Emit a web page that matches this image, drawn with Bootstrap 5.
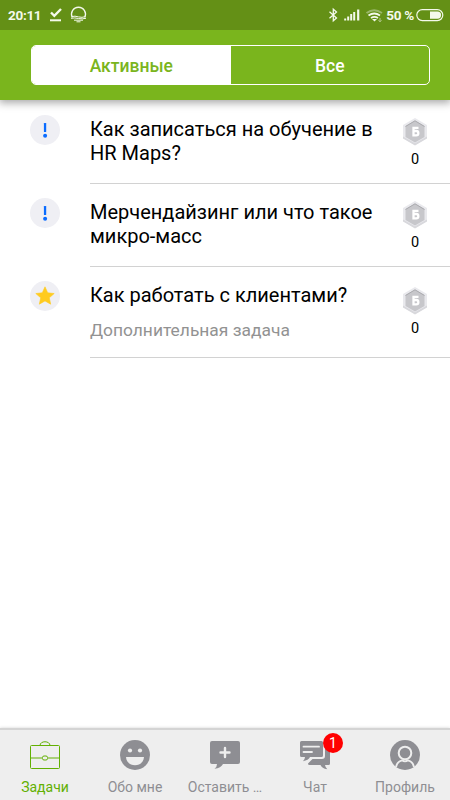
<!DOCTYPE html>
<html lang="ru">
<head>
<meta charset="utf-8">
<meta name="viewport" content="width=device-width, initial-scale=1">
<title>Задачи</title>
<link href="https://cdn.jsdelivr.net/npm/bootstrap@5.3.0/dist/css/bootstrap.min.css" rel="stylesheet">
<style>
body{font-family:Roboto,"Noto Sans",sans-serif;color:#000;background:#fff}
svg{display:block;flex:none}
.app{height:800px;width:450px}
.status-line{height:30px;background:#649016;color:#f4f9ec;font-size:13.500px;letter-spacing:-.3px;font-weight:700;line-height:30px;padding-left:8px;padding-right:6px;z-index:2}
.status-marks{margin-left:5px}
.battery{margin-left:2px}
.battery-value{margin-left:3px}
.top-panel{height:70px;background:#7ab51d;padding:15px 20px 15px 31px;box-shadow:0 2px 8px 1px rgba(0,0,0,.34);z-index:1}
.switcher{border:1px solid #fff;border-radius:5px;height:40px;overflow:hidden}
.switcher .btn{border:0;border-radius:0;font-size:17.500px;font-weight:500;line-height:40px;padding:0;color:#fff}
.switcher .btn.active{background:#fff;color:#7ab51d}
.task{height:83px;padding-left:30px}
.task:first-child{height:84px}
.task.extra{height:91px}
.task-icon{width:30px;height:30px;margin-top:15px;margin-right:30px;background:#efeff4}
.task:not(:first-child) .task-icon{margin-top:14px}
.task-body{border-bottom:1px solid #d2d2d2;padding-top:17px}
.task:not(:first-child) .task-body{padding-top:16px}
.task-title{font-size:20px;line-height:24px;width:300px}
.task-note{font-size:17.400px;line-height:22px;margin-top:12px;color:#929292}
.score{width:50px;margin-right:10px;font-size:14.500px;line-height:18px}
.score{padding-top:1px}
.extra .score{padding-top:4px}
.bottom-bar{height:72px;background:#eee;border-top:2px solid #d4d4d4;box-shadow:0 0 3px rgba(0,0,0,.18)}
.bottom-bar .nav-link{padding:10px 0 0;font-size:14px;line-height:20px;color:#8e8e93}
.bottom-bar .nav-link.active{color:#62b002}
.caption{margin-top:7px;white-space:nowrap}
.count{position:absolute;left:23px;top:-7px;width:20px;height:20px;background:#f00;color:#fff;font-size:14px;line-height:20px}
</style>
<script src="https://cdn.jsdelivr.net/npm/bootstrap@5.3.0/dist/js/bootstrap.bundle.min.js"></script>
</head>
<body>
<svg width="0" height="0" class="position-absolute" aria-hidden="true">
<defs>
<g id="coin"><path d="M13 0 25 7v13L13 27 1 20V7Z" fill="#e9e9ed"/><path d="M1 18.500v2L13 27.500l12-7v-2L13 25.300Z" fill="#d8d8dc"/><path d="M13 2.500 22.500 8v11L13 24.500 3.500 19V8Z" fill="#c7c7cb"/><path d="M3.500 8.500 13 2.800l9.500 5.700" fill="none" stroke="#aaaaae"/><path d="M16.500 9.800h-5v7.500h2.700a2.100 2.100 0 0 0 0-4.300h-2.700" fill="none" stroke="#fff" stroke-width="2.300"/></g>
<g id="bang"><rect x="13.900" y="8" width="2.300" height="9" rx=".6" fill="#0a6cff"/><circle cx="15.100" cy="20.700" r="2" fill="#0a6cff"/></g>
</defs>
</svg>
<div class="app d-flex flex-column overflow-hidden">
  <header class="status-line position-relative d-flex align-items-center">
    <span>20:11</span>
    <svg class="status-marks" width="42" height="30" viewBox="0 0 42 30" fill="none" stroke="#f4f9ec"><path d="m5 12.500 3.300 3.300L15 9" stroke-width="2.400"/><path d="M4 20.300h11" stroke-width="2"/><path d="M26.300 17.500a7 7 0 1 1 12.400 0" stroke-width="1.300"/><path d="M25.500 16.600q3.500-1 7 .3 3.500 1 7-.3M25 18.300q3.800-.8 7.500.2 3.700.8 7.500-.2M28 20.200h9M30.500 21.800h4" stroke-width="1"/></svg>
    <svg class="ms-auto" width="56" height="30" viewBox="328 0 56 30" fill="none" stroke="#f4f9ec"><path d="m330.500 11.800 7 6.200-3.200 2.800V9.200l3.200 2.800-7 6.200" stroke-width="1.300"/><path d="M346.200 20.500v-2M349.200 20.500v-4M352.200 20.500v-6.500M355.200 20.500v-8.500" stroke-width="2"/><path d="M359.200 20.500V9.500" stroke-width="2.200"/><path d="M367.500 13q7.500-5.500 15.500 0" stroke="#9ab76a" stroke-width="1.800"/><path d="M369.500 15.500q5.800-4 11.500 0M372 18q3.500-2.200 7 0" stroke-width="1.800"/><path d="m373 19 2.500 2.500 2.500-2.500Z" fill="#f4f9ec" stroke="none"/><path d="M381 18v3.500m-1.500-1.200 1.500 1.500 1.500-1.500" stroke="#c7d6ac" stroke-width=".8"/></svg>
    <span class="text-nowrap battery-value">50 %</span>
    <svg width="28" height="16" viewBox="0 0 28 16" class="battery"><rect x=".8" y="2.600" width="26" height="11" rx="5.500" fill="none" stroke="#f4f9ec" stroke-width="1.200"/><path d="M14 4.500h7.500a3.600 3.600 0 0 1 0 7.200H14Z" fill="#f4f9ec"/></svg>
  </header>
  <div class="top-panel position-relative">
    <div class="switcher d-flex">
      <button class="btn active w-50">Активные</button>
      <button class="btn w-50">Все</button>
    </div>
  </div>
  <main class="flex-grow-1">
    <article class="task d-flex">
      <div class="task-icon rounded-circle"><svg width="30" height="30"><use href="#bang"/></svg></div>
      <div class="task-body flex-grow-1 d-flex">
        <div class="task-title">Как записаться на обучение в HR Maps?</div>
        <div class="score d-flex flex-column align-items-center"><svg width="26" height="33"><use href="#coin"/></svg>0</div>
      </div>
    </article>
    <article class="task d-flex">
      <div class="task-icon rounded-circle"><svg width="30" height="30"><use href="#bang"/></svg></div>
      <div class="task-body flex-grow-1 d-flex">
        <div class="task-title">Мерчендайзинг или что такое микро-масс</div>
        <div class="score d-flex flex-column align-items-center"><svg width="26" height="33"><use href="#coin"/></svg>0</div>
      </div>
    </article>
    <article class="task extra d-flex">
      <div class="task-icon rounded-circle"><svg width="30" height="30"><path d="m15 5.800 2.700 6 6.500.7-4.900 4.300 1.400 6.400-5.700-3.300-5.700 3.300 1.400-6.400-4.900-4.300 6.500-.7Z" fill="#ffcb20" stroke="#ffcb20" stroke-width=".6"/></svg></div>
      <div class="task-body flex-grow-1 d-flex">
        <div class="task-title">Как работать с клиентами?<div class="task-note">Дополнительная задача</div></div>
        <div class="score d-flex flex-column align-items-center"><svg width="26" height="33"><use href="#coin"/></svg>0</div>
      </div>
    </article>
  </main>
  <nav class="bottom-bar nav nav-justified flex-nowrap">
    <a class="nav-link active d-flex flex-column align-items-center" href="#"><svg width="32" height="30" viewBox="0 0 32 30" fill="none" stroke="#62b002"><rect x="1.500" y="5.500" width="29" height="23" rx="1"/><path d="M11 5.500c0-5 10-5 10 0M1.500 18H13m6 0h11.500"/><rect x="13.500" y="16" width="5" height="4" rx="1.500"/></svg><span class="caption">Задачи</span></a>
    <a class="nav-link d-flex flex-column align-items-center" href="#"><svg width="30" height="30"><circle cx="15" cy="15" r="15" fill="#8e8e93"/><circle cx="10" cy="10.500" r="2.100" fill="#eee"/><circle cx="20" cy="10.500" r="2.100" fill="#eee"/><path d="M6 17h18c-.5 11-17.500 11-18 0Z" fill="#eee"/></svg><span class="caption">Обо мне</span></a>
    <a class="nav-link d-flex flex-column align-items-center" href="#"><svg width="30" height="30"><path d="M2 1h26q2 0 2 2v19q0 2-2 2H13q-2 4-8.500 4.800Q7 27 7 24H2q-2 0-2-2V3q0-2 2-2Z" fill="#8e8e93"/><path d="M15 8v9m-4.500-4.500h9" stroke="#eee" stroke-width="2.400" stroke-linecap="round"/></svg><span class="caption">Оставить …</span></a>
    <a class="nav-link d-flex flex-column align-items-center" href="#"><span class="position-relative"><svg width="30" height="30" fill="#8e8e93"><path d="M1.500 1h20q1.500 0 1.500 1.500v13q0 1.500-1.500 1.500H10q-1.500 3.300-7 4.200Q5 19 5 17H1.500Q0 17 0 15.500v-13Q0 1 1.500 1Z"/><path d="M25 7h3.500Q30 7 30 8.500v15q0 1.500-1.500 1.500H25q.3 2.500 2.300 4.200-5.500-.8-6.800-4.200H9.500Q8 25 8 23.500L12.500 19H22q3 0 3-3Z"/><path d="M3.500 6.700h15.500M3.500 12h8.500" stroke="#eee" stroke-width="1.800" stroke-linecap="round"/></svg><span class="count rounded-circle text-center">1</span></span><span class="caption">Чат</span></a>
    <a class="nav-link d-flex flex-column align-items-center" href="#"><svg width="30" height="30"><circle cx="15" cy="15" r="15" fill="#8e8e93"/><circle cx="15" cy="13" r="6.300" fill="none" stroke="#eee" stroke-width="2"/><path d="M6 27q1-5.500 6-6.700 3 2 6 0 5 1.200 6 6.700" fill="none" stroke="#eee" stroke-width="1.800"/></svg><span class="caption">Профиль</span></a>
  </nav>
</div>
</body>
</html>
